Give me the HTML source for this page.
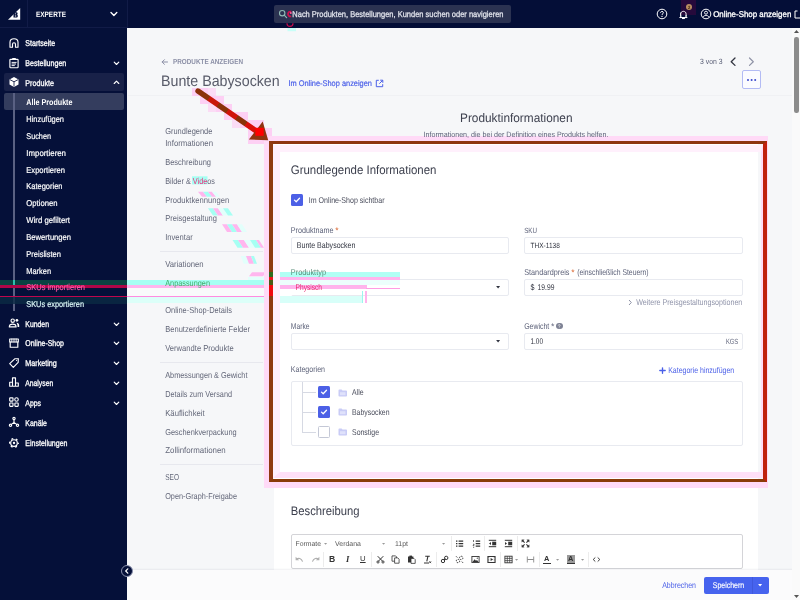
<!DOCTYPE html>
<html lang="de"><head><meta charset="utf-8"><title>Bunte Babysocken</title>
<style>
html,body{margin:0;padding:0}
body{width:800px;height:600px;overflow:hidden;position:relative;background:#f6f7f9;font-family:"Liberation Sans",sans-serif;}
.a{position:absolute}
.t{position:absolute;white-space:pre;line-height:12px;height:12px;will-change:transform}
#top{left:0;top:0;width:800px;height:28px;background:#040e37}
#side{left:0;top:0;width:127px;height:600px;background:#051039}
.inp{background:#fff;border:1px solid #e8eaf0;border-radius:2px;box-sizing:border-box}
.sep{background:#e7e8ee;height:1px;left:160px;width:103px}
.cb{width:12px;height:12px;border-radius:1.5px;background:#4c60e6;box-sizing:border-box}
.cb.off{background:#fff;border:1px solid #c4c8d6}
.tl{background:#d6d9e3}
svg{position:absolute;overflow:visible}

</style></head>
<body>
<div class="a" id="top"></div>
<div class="a" id="side"></div>
<!-- header dividers -->
<div class="a" style="left:27px;top:0;width:1px;height:27px;background:#111b47"></div>
<div class="a" style="left:0;top:27px;width:127px;height:1px;background:#111b47"></div>
<div class="a" style="left:127px;top:0;width:1px;height:28px;background:#111b47"></div>
<!-- logo -->
<svg style="left:0;top:0" width="28" height="28" viewBox="0 0 28 28">
  <path d="M8 19.8 L20.2 19.8 L20.2 8 Z" fill="#fff"/>
  <path d="M13.500 12.300h2.700c.9 0 1.400.5 1.400 1.200c0 .6-.2.900-.6 1.100c.5.200.8.600.8 1.300c0 .9-.6 1.600-1.600 1.600h-2.700z" fill="#051039"/>
  <path d="M14.900 13.500h1.100v.8h-1.100zM14.900 15.500h1.300v.9h-1.300z" fill="#fff"/>
</svg>
<svg style="left:110px;top:10px" width="8" height="8" viewBox="0 0 8 8"><path d="M1 2.6 L3.9 5.4 L6.8 2.6" fill="none" stroke="#fff" stroke-width="1.4" stroke-linecap="round" stroke-linejoin="round"/></svg>
<!-- search -->
<div class="a" style="left:274px;top:5px;width:236.5px;height:18px;background:#2b3251;border-radius:2px"></div>
<svg style="left:278px;top:9px" width="10" height="10" viewBox="0 0 10 10"><circle cx="4.2" cy="4.2" r="2.7" fill="none" stroke="#8fb9b4" stroke-width="1.1"/><path d="M6.2 6.2 L8.6 8.6" stroke="#8fb9b4" stroke-width="1.2" stroke-linecap="round"/></svg>
<svg style="left:284px;top:8px" width="14" height="24" viewBox="0 0 14 24"><path d="M7.200 3.600A2.500 2.500 0 1 0 7.200 8.400" fill="none" stroke="#d2104e" stroke-width="1.700"/><circle cx="6.800" cy="5" r="1" fill="#ff5c9a"/><path d="M3 15.200C3 19.400 9 19.400 9 15.200" fill="none" stroke="#c40c4a" stroke-width="1.200"/><rect x="3.500" y="20" width="8.500" height="3.200" fill="#c8fff8"/></svg>
<!-- topbar icons -->
<svg style="left:656px;top:8px" width="12" height="12" viewBox="0 0 12 12"><circle cx="6" cy="6" r="4.8" fill="none" stroke="#fff" stroke-width="1"/><path d="M4.6 4.9c0-1 .6-1.5 1.4-1.5s1.4.5 1.4 1.3c0 1-1.4 1-1.4 2.2" fill="none" stroke="#fff" stroke-width="1"/><circle cx="6" cy="8.4" r=".65" fill="#fff"/></svg>
<svg style="left:678.200px;top:8.800px" width="10.800" height="10.800" viewBox="0 0 12 12"><path d="M3 8.6V5.6c0-1.8 1.3-3 3-3s3 1.200 3 3v3l.9.900H2.100z" fill="none" stroke="#fff" stroke-width="1" stroke-linejoin="round"/><path d="M5 10.600h2" stroke="#fff" stroke-width="1.1" stroke-linecap="round"/></svg>
<div class="a" style="left:680.5px;top:0;width:15.5px;height:15px;background:#2a0a3c;opacity:.9"></div>
<svg style="left:678.200px;top:8.800px" width="10.800" height="10.800" viewBox="0 0 12 12"><path d="M3 8.6V5.6c0-1.8 1.3-3 3-3s3 1.200 3 3v3l.9.900H2.100z" fill="none" stroke="#fff" stroke-width="1" stroke-linejoin="round"/><path d="M5 10.600h2" stroke="#fff" stroke-width="1.1" stroke-linecap="round"/></svg>
<div class="a" style="left:686px;top:3.600px;width:6.400px;height:6.400px;border-radius:4px;background:#b98f62"></div>
<svg style="left:699.5px;top:8px" width="12" height="12" viewBox="0 0 12 12"><circle cx="6" cy="6" r="4.8" fill="none" stroke="#fff" stroke-width="1"/><circle cx="6" cy="4.700" r="1.5" fill="none" stroke="#fff" stroke-width=".9"/><path d="M2.900 9.300c.7-1.400 1.800-1.900 3.100-1.900s2.400.5 3.100 1.900" fill="none" stroke="#fff" stroke-width=".9"/></svg>
<svg style="left:794px;top:9.500px" width="8" height="9" viewBox="0 0 8 9"><path d="M3.500 1H1v7h6" fill="none" stroke="#fff" stroke-width="1"/></svg>
<!-- sidebar highlight rows -->
<div class="a" style="left:4px;top:73.400px;width:120px;height:18px;background:#182148;border-radius:2px"></div>
<div class="a" style="left:4px;top:93.400px;width:120px;height:16.500px;background:#343d5e;border-radius:2px"></div>
<div class="a" style="left:13.400px;top:93.400px;width:1.200px;height:218px;background:#5a6183"></div>
<svg style="left:7.50px;top:36.80px" width="12" height="12" viewBox="0 0 12 12"><path d="M2 10.200V5.300C2 3 3.800 1.700 6 1.700S10 3 10 5.300V10.200H7.500V7.200C7.500 6.200 6.900 5.700 6 5.700S4.500 6.200 4.500 7.200V10.200Z" fill="none" stroke="#fff" stroke-width="1.15" stroke-linecap="round" stroke-linejoin="round"/></svg>
<svg style="left:7.50px;top:56.80px" width="12" height="12" viewBox="0 0 12 12"><rect x="1.900" y="2.300" width="8.200" height="8.400" rx=".8" fill="none" stroke="#fff" stroke-width="1.15" stroke-linecap="round" stroke-linejoin="round"/><rect x="4.200" y=".9" width="3.600" height="2.200" rx=".5" fill="#fff"/><path d="M4 5.400h4.200M4 7h3.600M4 8.600h2.400" fill="none" stroke="#fff" stroke-width=".95" stroke-linecap="round" stroke-linejoin="round"/></svg>
<svg style="left:7.50px;top:75.60px" width="12" height="12" viewBox="0 0 12 12"><path d="M6 1.100L10.500 3.400V8.600L6 10.900L1.500 8.600V3.400Z" fill="#fff"/><path d="M2 3.700L6 5.800L10 3.700M6 5.800V10.500" fill="none" stroke="#182148" stroke-width=".9"/></svg>
<svg style="left:7.50px;top:317.00px" width="12" height="12" viewBox="0 0 12 12"><circle cx="4.700" cy="3.700" r="1.700" fill="none" stroke="#fff" stroke-width="1.15" stroke-linecap="round" stroke-linejoin="round"/><path d="M1.300 9.900c0-2 1.500-2.800 3.400-2.800s3.400.8 3.400 2.800z" fill="none" stroke="#fff" stroke-width="1.15" stroke-linecap="round" stroke-linejoin="round"/><circle cx="8.900" cy="3.300" r="1.350" fill="#fff"/><path d="M8.400 5.800c1.700 0 2.800.9 2.800 2.600v1.500H9.600c0-1.800-.4-3-1.200-4.100z" fill="#fff"/></svg>
<svg style="left:7.50px;top:337.20px" width="12" height="12" viewBox="0 0 12 12"><path d="M1.700 2H10.300V5H1.700Z" fill="none" stroke="#fff" stroke-width="1.15" stroke-linecap="round" stroke-linejoin="round"/><path d="M3.850 2V5M6 2V5M8.150 2V5" fill="none" stroke="#fff" stroke-width=".95" stroke-linecap="round" stroke-linejoin="round"/><path d="M2.200 5V10.200H9.800V5" fill="none" stroke="#fff" stroke-width="1.15" stroke-linecap="round" stroke-linejoin="round"/></svg>
<svg style="left:7.50px;top:356.70px" width="12" height="12" viewBox="0 0 12 12"><path d="M6.700 1.800L10.300 1.700L10.200 5.300L5.300 10.300L1.700 6.700Z" fill="none" stroke="#fff" stroke-width="1.15" stroke-linecap="round" stroke-linejoin="round"/><circle cx="8.500" cy="3.500" r=".55" fill="#fff"/></svg>
<svg style="left:7.50px;top:376.40px" width="12" height="12" viewBox="0 0 12 12"><path d="M1.700 10.200V6.200H4.500V10.200M4.500 10.200V1.900H7.500V10.200M7.500 10.200V7H10.300V10.200H1.700" fill="none" stroke="#fff" stroke-width="1.15" stroke-linecap="round" stroke-linejoin="round"/></svg>
<svg style="left:7.50px;top:396.20px" width="12" height="12" viewBox="0 0 12 12"><rect x="1.700" y="1.800" width="3.300" height="3.300" rx=".5" fill="none" stroke="#fff" stroke-width="1.15" stroke-linecap="round" stroke-linejoin="round"/><circle cx="8.500" cy="3.450" r="1.750" fill="none" stroke="#fff" stroke-width="1.15" stroke-linecap="round" stroke-linejoin="round"/><rect x="1.700" y="7" width="3.300" height="3.300" rx=".5" fill="none" stroke="#fff" stroke-width="1.15" stroke-linecap="round" stroke-linejoin="round"/><rect x="6.900" y="7" width="3.300" height="3.300" rx=".5" fill="none" stroke="#fff" stroke-width="1.15" stroke-linecap="round" stroke-linejoin="round"/></svg>
<svg style="left:7.50px;top:416.20px" width="12" height="12" viewBox="0 0 12 12"><circle cx="6" cy="2.500" r="1.150" fill="none" stroke="#fff" stroke-width="1.15" stroke-linecap="round" stroke-linejoin="round"/><circle cx="2.500" cy="9.200" r="1.150" fill="none" stroke="#fff" stroke-width="1.15" stroke-linecap="round" stroke-linejoin="round"/><circle cx="9.500" cy="9.200" r="1.150" fill="none" stroke="#fff" stroke-width="1.15" stroke-linecap="round" stroke-linejoin="round"/><path d="M6 3.700V6.400L3.400 8.400M6 6.400L8.600 8.400" fill="none" stroke="#fff" stroke-width="1.15" stroke-linecap="round" stroke-linejoin="round"/></svg>
<svg style="left:7.50px;top:436.60px" width="12" height="12" viewBox="0 0 12 12"><circle cx="6" cy="6" r="3.300" fill="none" stroke="#fff" stroke-width="1.15" stroke-linecap="round" stroke-linejoin="round"/><circle cx="6" cy="6" r="4.350" fill="none" stroke="#fff" stroke-width="1.300" stroke-dasharray="1.900 2.655" stroke-dashoffset=".95"/><circle cx="6" cy="6" r="1.150" fill="#fff"/></svg>
<svg style="left:112.80px;top:61.30px" width="7" height="4.6" viewBox="0 0 7 4.6"><path d="M1.200 1.200L3.500 3.500L5.800 1.200" fill="none" stroke="#fff" stroke-width="1.150" stroke-linecap="round" stroke-linejoin="round"/></svg>
<svg style="left:112.80px;top:80.10px" width="7" height="4.6" viewBox="0 0 7 4.6"><path d="M1.200 3.500L3.500 1.200L5.800 3.500" fill="none" stroke="#fff" stroke-width="1.150" stroke-linecap="round" stroke-linejoin="round"/></svg>
<svg style="left:112.80px;top:321.50px" width="7" height="4.6" viewBox="0 0 7 4.6"><path d="M1.200 1.200L3.500 3.500L5.800 1.200" fill="none" stroke="#fff" stroke-width="1.150" stroke-linecap="round" stroke-linejoin="round"/></svg>
<svg style="left:112.80px;top:341.30px" width="7" height="4.6" viewBox="0 0 7 4.6"><path d="M1.200 1.200L3.500 3.500L5.800 1.200" fill="none" stroke="#fff" stroke-width="1.150" stroke-linecap="round" stroke-linejoin="round"/></svg>
<svg style="left:112.80px;top:361.10px" width="7" height="4.6" viewBox="0 0 7 4.6"><path d="M1.200 1.200L3.500 3.500L5.800 1.200" fill="none" stroke="#fff" stroke-width="1.150" stroke-linecap="round" stroke-linejoin="round"/></svg>
<svg style="left:112.80px;top:381.10px" width="7" height="4.6" viewBox="0 0 7 4.6"><path d="M1.200 1.200L3.500 3.500L5.800 1.200" fill="none" stroke="#fff" stroke-width="1.150" stroke-linecap="round" stroke-linejoin="round"/></svg>
<svg style="left:112.80px;top:400.70px" width="7" height="4.6" viewBox="0 0 7 4.6"><path d="M1.200 1.200L3.500 3.500L5.800 1.200" fill="none" stroke="#fff" stroke-width="1.150" stroke-linecap="round" stroke-linejoin="round"/></svg>
<!-- page header -->
<div class="a" style="left:128px;top:95px;width:664px;height:1px;background:#f0f1f4"></div>
<svg style="left:161px;top:57.500px" width="8" height="8" viewBox="0 0 8 8"><path d="M6.500 4H1.200M3.400 1.700 L1.100 4 L3.400 6.300" fill="none" stroke="#8b8fa6" stroke-width="1" stroke-linecap="round" stroke-linejoin="round"/></svg>
<svg style="left:374.500px;top:78.500px" width="9" height="9" viewBox="0 0 9 9"><path d="M3.800 1.300H1.300v6.400h6.400V5.200" fill="none" stroke="#4a5fe8" stroke-width="1"/><path d="M5.200 1.200h2.600v2.600M7.600 1.400 L4.300 4.700" fill="none" stroke="#4a5fe8" stroke-width="1"/></svg>
<svg style="left:728.500px;top:57px" width="9" height="10" viewBox="0 0 9 10"><path d="M6 1 L2.200 4.700 L6 8.400" fill="none" stroke="#313440" stroke-width="1.300" stroke-linecap="round" stroke-linejoin="round"/></svg>
<svg style="left:746.500px;top:57px" width="9" height="10" viewBox="0 0 9 10"><path d="M2.500 1 L6.300 4.700 L2.500 8.400" fill="none" stroke="#8e92a6" stroke-width="1.200" stroke-linecap="round" stroke-linejoin="round"/></svg>
<div class="a" style="left:742.200px;top:70.200px;width:18.500px;height:18.500px;border:1px solid #b3bbf4;border-radius:2px;background:#fbfbff;box-sizing:border-box"></div>
<div class="a" style="left:746.500px;top:78.500px;width:2.100px;height:2.100px;border-radius:1.100px;background:#3a48cc;box-shadow:3.600px 0 0 #3a48cc,7.200px 0 0 #3a48cc"></div>
<!-- left nav separators -->
<div class="a sep" style="top:250.500px"></div>
<div class="a sep" style="top:297px"></div>
<div class="a sep" style="top:361.500px"></div>
<div class="a sep" style="top:463.500px"></div>

<!-- cards -->
<div class="a" style="left:274px;top:142px;width:484.400px;height:337px;background:#fff"></div>
<div class="a" style="left:274px;top:487.600px;width:484.400px;height:113px;background:#fff"></div>

<!-- card1 fields -->
<div class="a cb" style="left:290.600px;top:194.400px"></div>
<svg style="left:290.600px;top:194.400px" width="12" height="12" viewBox="0 0 12 12"><path d="M3.500 6.100 L5.200 7.700 L8.500 4.300" fill="none" stroke="#fff" stroke-width="1.300" stroke-linecap="round" stroke-linejoin="round"/></svg>
<div class="a inp" style="left:290.600px;top:236.800px;width:218px;height:17px"></div>
<div class="a inp" style="left:523.600px;top:236.800px;width:219px;height:17px"></div>
<div class="a inp" style="left:290.600px;top:278.500px;width:218px;height:17px"></div>
<div class="a inp" style="left:523.600px;top:278.500px;width:219px;height:17px"></div>
<div class="a inp" style="left:290.600px;top:332.500px;width:218px;height:17px"></div>
<div class="a inp" style="left:523.600px;top:332.500px;width:219px;height:17px"></div>
<svg style="left:496.400px;top:285.900px" width="4.200" height="2.400" viewBox="0 0 5 3"><path d="M0 0h5L2.500 3z" fill="#313440"/></svg>
<svg style="left:496.400px;top:339.900px" width="4.200" height="2.400" viewBox="0 0 5 3"><path d="M0 0h5L2.500 3z" fill="#313440"/></svg>
<svg style="left:628.400px;top:299.300px" width="5" height="7" viewBox="0 0 5 7"><path d="M1.300 1.300 L3.300 3.500 L1.300 5.700" fill="none" stroke="#8e92a6" stroke-width="1" stroke-linecap="round" stroke-linejoin="round"/></svg>
<!-- help icon -->
<div class="a" style="left:556.400px;top:322.900px;width:6.400px;height:6.400px;border-radius:3.200px;background:#7e8294"></div>
<svg style="left:556.400px;top:322.900px" width="6.400" height="6.400" viewBox="0 0 5.800 5.800"><path d="M2.100 2.300c0-.6.400-.9.800-.9s.8.300.8.800c0 .6-.8.600-.8 1.300" fill="none" stroke="#fff" stroke-width=".6"/><circle cx="2.900" cy="4.400" r=".4" fill="#fff"/></svg>
<!-- plus -->
<svg style="left:658.500px;top:366.700px" width="7" height="7" viewBox="0 0 7 7"><path d="M3.500 .800v5.400M.800 3.500h5.400" stroke="#4a5fe8" stroke-width="1.350" stroke-linecap="round"/></svg>
<!-- category box -->
<div class="a inp" style="left:290.600px;top:381.400px;width:452px;height:65px"></div>
<div class="a tl" style="left:301.800px;top:382px;width:1px;height:50.800px"></div>
<div class="a tl" style="left:301.800px;top:392.200px;width:14px;height:1px"></div>
<div class="a tl" style="left:301.800px;top:412.200px;width:14px;height:1px"></div>
<div class="a tl" style="left:301.800px;top:432.200px;width:14px;height:1px"></div>
<div class="a cb" style="left:317.600px;top:386.400px"></div>
<svg style="left:317.600px;top:386.400px" width="12" height="12" viewBox="0 0 12 12"><path d="M3.500 6.100 L5.200 7.700 L8.500 4.300" fill="none" stroke="#fff" stroke-width="1.300" stroke-linecap="round" stroke-linejoin="round"/></svg>
<div class="a cb" style="left:317.600px;top:406.200px"></div>
<svg style="left:317.600px;top:406.200px" width="12" height="12" viewBox="0 0 12 12"><path d="M3.500 6.100 L5.200 7.700 L8.500 4.300" fill="none" stroke="#fff" stroke-width="1.300" stroke-linecap="round" stroke-linejoin="round"/></svg>
<div class="a cb off" style="left:317.600px;top:426.200px"></div>
<svg style="left:338px;top:388.500px" width="10" height="8" viewBox="0 0 10 8"><path d="M.5 1.300c0-.5.300-.8.800-.8h2.300l.9 1h3.700c.5 0 .8.300.8.800v4.400c0 .5-.3.800-.8.800H1.300c-.5 0-.8-.3-.8-.8z" fill="#c9ccf6"/><path d="M2 3.200h5.500v3H2z" fill="#dfe1fb"/></svg>
<svg style="left:338px;top:408.300px" width="10" height="8" viewBox="0 0 10 8"><path d="M.5 1.300c0-.5.300-.8.800-.8h2.300l.9 1h3.700c.5 0 .8.300.8.800v4.400c0 .5-.3.800-.8.800H1.300c-.5 0-.8-.3-.8-.8z" fill="#c9ccf6"/><path d="M2 3.200h5.500v3H2z" fill="#dfe1fb"/></svg>
<svg style="left:338px;top:428.300px" width="10" height="8" viewBox="0 0 10 8"><path d="M.5 1.300c0-.5.300-.8.800-.8h2.300l.9 1h3.700c.5 0 .8.300.8.800v4.400c0 .5-.3.800-.8.800H1.300c-.5 0-.8-.3-.8-.8z" fill="#c9ccf6"/><path d="M2 3.200h5.500v3H2z" fill="#dfe1fb"/></svg>

<!-- editor -->
<div class="a" style="left:290.600px;top:534.400px;width:452px;height:34.200px;border:1px solid #d4d4d8;border-radius:2px;background:#fff;box-sizing:border-box"></div>
<svg style="left:323.80px;top:542.60px" width="3.2" height="1.8" viewBox="0 0 3.2 1.8"><path d="M0 0h3.200L1.600 1.800z" fill="#9a9a9a"/></svg>
<svg style="left:381.80px;top:542.60px" width="3.2" height="1.8" viewBox="0 0 3.2 1.8"><path d="M0 0h3.200L1.600 1.800z" fill="#9a9a9a"/></svg>
<svg style="left:442.20px;top:542.60px" width="3.2" height="1.8" viewBox="0 0 3.2 1.8"><path d="M0 0h3.200L1.600 1.800z" fill="#9a9a9a"/></svg>
<div class="a" style="left:451.0px;top:536.0px;width:1px;height:15.0px;background:#ececec"></div>
<div class="a" style="left:483.5px;top:536.0px;width:1px;height:15.0px;background:#ececec"></div>
<div class="a" style="left:516.5px;top:536.0px;width:1px;height:15.0px;background:#ececec"></div>
<svg style="left:455.30px;top:538.70px" width="9" height="9" viewBox="0 0 9 9"><path d="M1 1.500h1.400v1.200H1zM1 4h1.400v1.200H1zM1 6.500h1.400v1.200H1z" fill="#333"/><path d="M3.600 2.100h4.600M3.600 4.600h4.600M3.600 7.100h4.600" stroke="#333" stroke-width="1.100"/></svg>
<svg style="left:471.50px;top:538.70px" width="9" height="9" viewBox="0 0 9 9"><path d="M1.500 1v2M1 5.200h1.200L1 6.600h1.300M1 8.300h1.200" stroke="#333" stroke-width=".7" fill="none"/><path d="M3.700 2.100h4.500M3.700 4.600h4.500M3.700 7.100h4.500" stroke="#333" stroke-width="1.100"/></svg>
<svg style="left:487.50px;top:538.70px" width="9" height="9" viewBox="0 0 9 9"><path d="M.8 1.300h7.400M.8 7.700h7.400" stroke="#333" stroke-width="1"/><rect x="4.200" y="2.700" width="4" height="3.600" fill="#333"/><path d="M3 3.100v2.800L1 4.500z" fill="#333"/></svg>
<svg style="left:503.50px;top:538.70px" width="9" height="9" viewBox="0 0 9 9"><path d="M.8 1.300h7.400M.8 7.700h7.400" stroke="#333" stroke-width="1"/><rect x="4.200" y="2.700" width="4" height="3.600" fill="#333"/><path d="M1 3.100v2.800L3 4.500z" fill="#333"/></svg>
<svg style="left:520.50px;top:538.70px" width="9" height="9" viewBox="0 0 9 9"><path d="M.8 3.200V.8h2.400L.8 3.200M8.200 3.200V.8H5.800L8.200 3.200M.8 5.800v2.400h2.400L.8 5.800M8.200 5.800v2.400H5.800L8.200 5.800" fill="#333" stroke="#333" stroke-width=".3"/><path d="M1.600 1.600L3.600 3.600M7.400 1.600L5.400 3.600M1.600 7.400L3.600 5.400M7.400 7.400L5.400 5.400" stroke="#333" stroke-width="1.100"/></svg>
<svg style="left:294.90px;top:555.10px" width="9" height="9" viewBox="0 0 9 9"><path d="M1.200 4.300C3.500 2.700 6.300 3 7.600 6.600" fill="none" stroke="#b0b0b0" stroke-width="1.200"/><path d="M.6 1.700v3.600h3.500z" fill="#b0b0b0"/></svg>
<svg style="left:310.50px;top:555.10px" width="9" height="9" viewBox="0 0 9 9"><path d="M7.800 4.300C5.500 2.700 2.700 3 1.400 6.600" fill="none" stroke="#b0b0b0" stroke-width="1.200"/><path d="M8.400 1.700v3.600H4.900z" fill="#b0b0b0"/></svg>
<div class="a" style="left:323.4px;top:552.0px;width:1px;height:15.0px;background:#ececec"></div>
<span class="t" style="left:328.6px;top:553.4px;font-size:8.6px;font-weight:700;color:#333">B</span>
<span class="t" style="left:345.6px;top:553.4px;font-size:8.6px;font-weight:700;font-style:italic;color:#333;font-family:'Liberation Serif',serif">I</span>
<span class="t" style="left:360.2px;top:553.2px;font-size:7.8px;color:#333;text-decoration:underline;text-underline-offset:1px">U</span>
<div class="a" style="left:371.4px;top:552.0px;width:1px;height:15.0px;background:#ececec"></div>
<svg style="left:375.90px;top:555.10px" width="9" height="9" viewBox="0 0 9 9"><path d="M1.700 1.200L6.700 6.300M7.300 1.200L2.300 6.300" stroke="#333" stroke-width="1"/><circle cx="2" cy="7" r="1.100" fill="none" stroke="#333" stroke-width=".9"/><circle cx="7" cy="7" r="1.100" fill="none" stroke="#333" stroke-width=".9"/></svg>
<svg style="left:391.10px;top:555.10px" width="9" height="9" viewBox="0 0 9 9"><path d="M1 .9h3.600l1 1v4.300H1z" fill="#fff" stroke="#333" stroke-width=".8"/><path d="M3.600 2.900h3.200l1.300 1.300v4H3.600z" fill="#fff" stroke="#333" stroke-width=".8"/></svg>
<svg style="left:406.90px;top:555.10px" width="9" height="9" viewBox="0 0 9 9"><path d="M1 1.500h5.400v6H1z" fill="#333"/><rect x="2.400" y=".6" width="2.600" height="1.600" fill="#333"/><path d="M4 3.400h3l1.200 1.200v3.800H4z" fill="#fff" stroke="#333" stroke-width=".8"/></svg>
<svg style="left:422.70px;top:555.10px" width="9" height="9" viewBox="0 0 9 9"><path d="M2.200 1.300h4.600M4.900 1.300L3.800 6.300" stroke="#333" stroke-width="1.100" fill="none"/><path d="M1 8h5" stroke="#333" stroke-width="1"/><path d="M6.300 6.300l1.800 1.800M8.100 6.300L6.300 8.100" stroke="#333" stroke-width=".8"/></svg>
<div class="a" style="left:435.6px;top:552.0px;width:1px;height:15.0px;background:#ececec"></div>
<svg style="left:439.50px;top:555.10px" width="9" height="9" viewBox="0 0 9 9"><circle cx="3" cy="6" r="1.700" fill="none" stroke="#333" stroke-width="1"/><circle cx="6.200" cy="2.900" r="1.700" fill="none" stroke="#333" stroke-width="1"/><path d="M3.900 5.100L5.300 3.800" stroke="#333" stroke-width="1"/></svg>
<svg style="left:455.30px;top:555.10px" width="9" height="9" viewBox="0 0 9 9"><circle cx="3" cy="6" r="1.700" fill="none" stroke="#333" stroke-width="1" stroke-dasharray="1.400 1"/><circle cx="6.200" cy="2.900" r="1.700" fill="none" stroke="#333" stroke-width="1" stroke-dasharray="1.400 1"/><path d="M1 1.200L2.400 2.600M6.800 6.600L8.200 8" stroke="#333" stroke-width=".8"/></svg>
<svg style="left:471.10px;top:555.10px" width="9" height="9" viewBox="0 0 9 9"><rect x=".9" y="1.500" width="7.200" height="6" fill="none" stroke="#333" stroke-width=".9"/><path d="M1.500 7L3.600 4.200L5 5.800L6 5L7.500 7z" fill="#333"/><circle cx="6.300" cy="3.200" r=".6" fill="#333"/></svg>
<svg style="left:486.90px;top:555.10px" width="9" height="9" viewBox="0 0 9 9"><rect x=".9" y="1.500" width="7.200" height="6" fill="none" stroke="#333" stroke-width="1"/><path d="M3.600 3v3L6.100 4.500z" fill="#333"/><path d="M1.700 2.300v4.400M7.300 2.300v4.400" stroke="#333" stroke-width=".7" stroke-dasharray=".8 .8"/></svg>
<div class="a" style="left:500.3px;top:552.0px;width:1px;height:15.0px;background:#ececec"></div>
<svg style="left:503.50px;top:555.10px" width="9" height="9" viewBox="0 0 9 9"><rect x=".9" y="1.200" width="7.200" height="6.600" fill="none" stroke="#333" stroke-width=".9"/><path d="M.9 3.400h7.200M.9 5.600h7.200M3.300 1.200v6.600M5.700 1.200v6.600" stroke="#333" stroke-width=".7"/></svg>
<svg style="left:515.00px;top:559.00px" width="3.2" height="1.8" viewBox="0 0 3.2 1.8"><path d="M0 0h3.200L1.600 1.800z" fill="#9a9a9a"/></svg>
<svg style="left:525.50px;top:555.10px" width="9" height="9" viewBox="0 0 9 9"><path d="M1.300 1.500v6M7.700 1.500v6" stroke="#8a8a8a" stroke-width=".9"/><path d="M1.300 4.500h6.400" stroke="#8a8a8a" stroke-width="1"/></svg>
<div class="a" style="left:539.0px;top:552.0px;width:1px;height:15.0px;background:#ececec"></div>
<span class="t" style="left:544px;top:552.600px;font-size:7.4px;font-weight:700;color:#333">A</span>
<div class="a" style="left:543px;top:563.300px;width:7.600px;height:1.200px;background:#333"></div>
<svg style="left:556.40px;top:559.00px" width="3.2" height="1.8" viewBox="0 0 3.2 1.8"><path d="M0 0h3.200L1.600 1.800z" fill="#9a9a9a"/></svg>
<div class="a" style="left:567px;top:555.300px;width:8px;height:8.200px;background:#9a9a9a"></div>
<span class="t" style="left:568.200px;top:552.600px;font-size:7.4px;font-weight:700;color:#333">A</span>
<div class="a" style="left:567px;top:563.300px;width:8px;height:1.200px;background:#333"></div>
<svg style="left:580.80px;top:559.00px" width="3.2" height="1.8" viewBox="0 0 3.2 1.8"><path d="M0 0h3.200L1.600 1.800z" fill="#9a9a9a"/></svg>
<div class="a" style="left:588.0px;top:552.0px;width:1px;height:15.0px;background:#ececec"></div>
<svg style="left:591.90px;top:555.10px" width="9" height="9" viewBox="0 0 9 9"><path d="M3.300 2.500L1.200 4.500L3.300 6.500M5.700 2.500L7.800 4.500L5.700 6.500" fill="none" stroke="#333" stroke-width=".95"/></svg>

<!-- footer -->
<div class="a" style="left:127px;top:569.500px;width:666px;height:31px;background:#fbfbfc;box-shadow:0 -1px 1.500px rgba(40,50,80,.07)"></div>
<div class="a" style="left:704.400px;top:576.800px;width:64.200px;height:17px;border-radius:2px;background:#4663ee"></div>
<div class="a" style="left:751.800px;top:576.800px;width:1px;height:17px;background:#3f58dc"></div>
<svg style="left:757.600px;top:584.300px" width="4.200" height="2.400" viewBox="0 0 5 3"><path d="M0 0h5L2.500 3z" fill="#fff"/></svg>

<!-- collapse btn -->
<div class="a" style="left:121px;top:565.300px;width:12.200px;height:12.200px;border-radius:7px;background:#051039;border:1px solid #8a90ad;box-sizing:border-box"></div>
<svg style="left:123px;top:567.300px" width="8" height="8" viewBox="0 0 8 8"><path d="M4.800 1.800 L2.700 4 L4.800 6.200" fill="none" stroke="#fff" stroke-width="1.200" stroke-linecap="round" stroke-linejoin="round"/></svg>

<!-- scrollbar -->
<div class="a" style="left:792px;top:28px;width:8px;height:572px;background:#fafafa"></div>
<div class="a" style="left:794.400px;top:36.700px;width:4.400px;height:76px;border-radius:2.200px;background:#8c8c8c"></div>
<svg style="left:794px;top:30px" width="5" height="3" viewBox="0 0 5 3"><path d="M0 3h5L2.500 0z" fill="#555"/></svg>
<svg style="left:794px;top:594.500px" width="5" height="3" viewBox="0 0 5 3"><path d="M0 0h5L2.500 3z" fill="#555"/></svg>

<div class="a" style="left:273.0px;top:271.8px;width:127.0px;height:5.6px;background:#b0fff4"></div>
<div class="a" style="left:273.0px;top:277.4px;width:127.0px;height:2.3px;background:#ffb4ec"></div>
<div class="a" style="left:273.0px;top:279.7px;width:127.0px;height:5.0px;background:#ecfffc"></div>
<div class="a" style="left:273.0px;top:284.9px;width:93.5px;height:3.7px;background:#ffb4ec"></div>
<div class="a" style="left:366.0px;top:288.0px;width:34.0px;height:0.9px;background:#ff9ce4"></div>
<div class="a" style="left:273.0px;top:288.8px;width:127.0px;height:6.6px;background:#ffffff"></div>
<div class="a" style="left:273.0px;top:295.5px;width:89.0px;height:7.6px;background:#d8fff9"></div>
<div class="a" style="left:273.0px;top:295.8px;width:7.0px;height:0.9px;background:#ff8ce0"></div>
<div class="a" style="left:361.5px;top:290.5px;width:1.8px;height:12.5px;background:#9cf5ee"></div>
<div class="a" style="left:364.5px;top:290.5px;width:2.2px;height:12.5px;background:#ffb4ec"></div>
<div class="a" style="left:0.0px;top:280.2px;width:127.0px;height:4.8px;background:#0a4342"></div>
<div class="a" style="left:13.4px;top:280.2px;width:1.2px;height:4.8px;background:#2fbfae"></div>
<div class="a" style="left:0.0px;top:285.0px;width:127.0px;height:3.2px;background:#ae0648"></div>
<div class="a" style="left:0.0px;top:296.2px;width:127.0px;height:0.9px;background:#c0064e"></div>
<div class="a" style="left:0.0px;top:297.1px;width:127.0px;height:7.0px;background:#0a2a44;opacity:0.8"></div>
<div class="a" style="left:127.0px;top:279.8px;width:139.0px;height:5.0px;background:#a6fff3"></div>
<div class="a" style="left:127.0px;top:284.8px;width:141.0px;height:3.0px;background:#ffb6ee"></div>
<div class="a" style="left:127.0px;top:287.8px;width:141.0px;height:8.0px;background:#ffffff;opacity:0.4"></div>
<div class="a" style="left:127.0px;top:295.8px;width:142.0px;height:0.9px;background:#ff8ce0"></div>
<div class="a" style="left:127.0px;top:296.7px;width:137.0px;height:6.6px;background:#dcfff9"></div>
<div class="a" style="left:248.0px;top:276.7px;width:18.0px;height:3.1px;background:#e2fffb"></div>
<svg style="left:0;top:0" width="800" height="600" viewBox="0 0 800 600"><path d="M192.0 176.3L207.5 176.3L207.5 184.4L192.0 184.4Z" fill="#a6fff3"/><path d="M198.0 191.8L203.0 191.8L207.0 196.7L202.0 196.7Z" fill="#ffb6ee"/><path d="M203.0 191.8L208.0 191.8L212.0 196.7L207.0 196.7Z" fill="#a6fff3"/><path d="M208.0 191.8L212.0 191.8L216.0 196.7L212.0 196.7Z" fill="#ffb6ee"/><path d="M212.0 191.8L216.0 191.8L220.0 196.7L216.0 196.7Z" fill="#e2fffb"/><path d="M208.0 208.3L213.0 208.3L218.0 215.6L213.0 215.6Z" fill="#a6fff3"/><path d="M213.0 208.3L218.0 208.3L223.0 215.6L218.0 215.6Z" fill="#ffb6ee"/><path d="M218.0 208.3L223.0 208.3L228.0 215.6L223.0 215.6Z" fill="#e2fffb"/><path d="M223.0 208.3L228.0 208.3L233.0 215.6L228.0 215.6Z" fill="#a6fff3"/><path d="M222.0 224.3L227.0 224.3L232.0 232.0L227.0 232.0Z" fill="#ffb6ee"/><path d="M227.0 224.3L232.0 224.3L237.0 232.0L232.0 232.0Z" fill="#a6fff3"/><path d="M232.0 224.3L237.0 224.3L242.0 232.0L237.0 232.0Z" fill="#ffb6ee"/><path d="M237.0 224.3L242.0 224.3L247.0 232.0L242.0 232.0Z" fill="#e2fffb"/><path d="M232.5 240.0L238.0 240.0L243.0 247.8L237.5 247.8Z" fill="#a6fff3"/><path d="M238.0 240.0L244.0 240.0L249.0 247.8L243.0 247.8Z" fill="#ffb6ee"/><path d="M244.0 240.0L250.0 240.0L255.0 247.8L249.0 247.8Z" fill="#e2fffb"/><path d="M250.0 240.0L256.0 240.0L261.0 247.8L255.0 247.8Z" fill="#a6fff3"/><path d="M256.0 240.0L259.0 240.0L264.0 247.8L261.0 247.8Z" fill="#ffb6ee"/><path d="M240.7 256.0L246.0 256.0L249.0 263.8L243.7 263.8Z" fill="#e2fffb"/><path d="M246.0 256.0L251.0 256.0L254.0 263.8L249.0 263.8Z" fill="#ffb6ee"/><path d="M251.0 256.0L254.0 256.0L257.0 263.8L254.0 263.8Z" fill="#a6fff3"/><path d="M264.0 256.0L267.0 256.0L270.0 263.8L267.0 263.8Z" fill="#ffb6ee"/><path d="M252.0 272.2L266.0 272.2L263.0 276.2L249.0 276.2Z" fill="#ffb6ee"/></svg>

<!-- annotation: rectangle + arrow -->
<div class="a" style="left:264px;top:136px;width:504px;height:351.600px;box-sizing:border-box;border-style:solid;border-color:#ffdaf7;border-width:5px 1.200px 6px 5px"></div>
<div class="a" style="left:273px;top:144.500px;width:489.500px;height:333.700px;box-sizing:border-box;border-style:solid;border-color:#fff0fc #ffdcf7 #ffe0f7 #ffeffc;border-width:7.500px 2.500px 6px 7px"></div>
<div class="a" style="left:269px;top:141px;width:498px;height:340.600px;box-sizing:border-box;border-style:solid;border-color:#8f3510 #c0220e #8a3b08 #8f3a10;border-width:3.600px 4.600px 3.500px 4px"></div>
<div class="a" style="left:269px;top:272px;width:4px;height:5.400px;background:#2f6a1c"></div>
<div class="a" style="left:269px;top:277.400px;width:4px;height:2.600px;background:#e8101a"></div>
<div class="a" style="left:269px;top:280px;width:4px;height:4.600px;background:#4a5a14"></div>
<div class="a" style="left:269px;top:284.600px;width:4px;height:11.400px;background:#f00a10"></div>
<svg style="left:0;top:0" width="800" height="600" viewBox="0 0 800 600">
<defs><linearGradient id="ag" gradientUnits="userSpaceOnUse" x1="198" y1="91" x2="256" y2="131">
<stop offset="0" stop-color="#8a3208"/><stop offset=".18" stop-color="#8a3208"/><stop offset=".19" stop-color="#c9180a"/><stop offset=".34" stop-color="#c9180a"/>
<stop offset=".35" stop-color="#8a3208"/><stop offset=".5" stop-color="#8a3208"/><stop offset=".51" stop-color="#d0140a"/><stop offset=".66" stop-color="#d0140a"/>
<stop offset=".67" stop-color="#8a3208"/><stop offset=".82" stop-color="#8a3208"/><stop offset=".83" stop-color="#d8100a"/><stop offset="1" stop-color="#d8100a"/></linearGradient></defs>
<rect x="192" y="88" width="8" height="8" fill="#ffc6f2" fill-opacity="0.80"/><rect x="200" y="88" width="8" height="8" fill="#ffc6f2" fill-opacity="0.80"/><rect x="208" y="88" width="8" height="8" fill="#ffc6f2" fill-opacity="0.55"/><rect x="200" y="96" width="8" height="8" fill="#ffc6f2" fill-opacity="0.80"/><rect x="208" y="96" width="8" height="8" fill="#ffc6f2" fill-opacity="0.80"/><rect x="216" y="96" width="8" height="8" fill="#ffc6f2" fill-opacity="0.80"/><rect x="208" y="104" width="8" height="8" fill="#ffc6f2" fill-opacity="0.55"/><rect x="216" y="104" width="8" height="8" fill="#ffc6f2" fill-opacity="0.80"/><rect x="224" y="104" width="8" height="8" fill="#ffc6f2" fill-opacity="0.80"/><rect x="224" y="112" width="8" height="8" fill="#ffc6f2" fill-opacity="0.80"/><rect x="232" y="112" width="8" height="8" fill="#ffc6f2" fill-opacity="0.80"/><rect x="240" y="112" width="8" height="8" fill="#ffc6f2" fill-opacity="0.80"/><rect x="232" y="120" width="8" height="8" fill="#ffc6f2" fill-opacity="0.55"/><rect x="240" y="120" width="8" height="8" fill="#ffc6f2" fill-opacity="0.80"/><rect x="248" y="120" width="8" height="8" fill="#ffc6f2" fill-opacity="0.80"/><rect x="256" y="120" width="8" height="8" fill="#ffc6f2" fill-opacity="0.80"/><rect x="248" y="128" width="8" height="8" fill="#ffc6f2" fill-opacity="0.80"/><rect x="256" y="128" width="8" height="8" fill="#ffc6f2" fill-opacity="0.80"/><rect x="264" y="128" width="8" height="8" fill="#ffc6f2" fill-opacity="0.80"/><rect x="248" y="136" width="8" height="8" fill="#ffc6f2" fill-opacity="0.80"/><rect x="256" y="136" width="8" height="8" fill="#ffc6f2" fill-opacity="0.80"/>
<path d="M198 91L257 131.500" stroke="url(#ag)" stroke-width="5.400" stroke-linecap="round" fill="none"/>
<path d="M262.700 121.500L248.900 139.600L268.200 140.200Z" fill="#8f3410"/>
<rect x="255.300" y="127.800" width="8.400" height="8" fill="#ff0000"/>
</svg>

<svg id="txt" style="left:0;top:0;will-change:transform" width="800" height="600" viewBox="0 0 800 600" font-family="Liberation Sans, sans-serif" text-rendering="geometricPrecision">
<text x="36.00" y="17" font-size="7.8" textLength="30.00" lengthAdjust="spacingAndGlyphs" fill="#ffffff" font-weight="700">EXPERTE</text>
<text x="292.30" y="17" font-size="8.4" textLength="211.20" lengthAdjust="spacingAndGlyphs" fill="#e4e6ee" stroke="#e4e6ee" stroke-width="0.25">Nach Produkten, Bestellungen, Kunden suchen oder navigieren</text>
<text x="713.20" y="17" font-size="8.4" textLength="78.10" lengthAdjust="spacingAndGlyphs" fill="#ffffff" stroke="#fff" stroke-width="0.32">Online-Shop anzeigen</text>
<text x="25.30" y="46" font-size="8.5" textLength="29.90" lengthAdjust="spacingAndGlyphs" fill="#ffffff" stroke="#fff" stroke-width="0.3">Startseite</text>
<text x="25.30" y="66" font-size="8.5" textLength="41.00" lengthAdjust="spacingAndGlyphs" fill="#ffffff" stroke="#fff" stroke-width="0.3">Bestellungen</text>
<text x="25.30" y="86" font-size="8.5" textLength="28.70" lengthAdjust="spacingAndGlyphs" fill="#ffffff" stroke="#fff" stroke-width="0.3">Produkte</text>
<text x="25.30" y="327" font-size="8.5" textLength="23.70" lengthAdjust="spacingAndGlyphs" fill="#ffffff" stroke="#fff" stroke-width="0.3">Kunden</text>
<text x="25.30" y="346" font-size="8.5" textLength="38.70" lengthAdjust="spacingAndGlyphs" fill="#ffffff" stroke="#fff" stroke-width="0.3">Online-Shop</text>
<text x="25.30" y="366" font-size="8.5" textLength="31.50" lengthAdjust="spacingAndGlyphs" fill="#ffffff" stroke="#fff" stroke-width="0.3">Marketing</text>
<text x="25.30" y="386" font-size="8.5" textLength="27.90" lengthAdjust="spacingAndGlyphs" fill="#ffffff" stroke="#fff" stroke-width="0.3">Analysen</text>
<text x="25.30" y="406" font-size="8.5" textLength="15.70" lengthAdjust="spacingAndGlyphs" fill="#ffffff" stroke="#fff" stroke-width="0.3">Apps</text>
<text x="25.30" y="426" font-size="8.5" textLength="21.70" lengthAdjust="spacingAndGlyphs" fill="#ffffff" stroke="#fff" stroke-width="0.3">Kanäle</text>
<text x="25.30" y="446" font-size="8.5" textLength="42.20" lengthAdjust="spacingAndGlyphs" fill="#ffffff" stroke="#fff" stroke-width="0.3">Einstellungen</text>
<text x="26.30" y="105" font-size="8.5" textLength="46.20" lengthAdjust="spacingAndGlyphs" fill="#ffffff" font-weight="700">Alle Produkte</text>
<text x="26.30" y="122" font-size="8.5" textLength="37.70" lengthAdjust="spacingAndGlyphs" fill="#ffffff" stroke="#ffffff" stroke-width="0.2">Hinzufügen</text>
<text x="26.30" y="139" font-size="8.5" textLength="24.70" lengthAdjust="spacingAndGlyphs" fill="#ffffff" stroke="#ffffff" stroke-width="0.2">Suchen</text>
<text x="26.30" y="156" font-size="8.5" textLength="39.70" lengthAdjust="spacingAndGlyphs" fill="#ffffff" stroke="#ffffff" stroke-width="0.2">Importieren</text>
<text x="26.30" y="173" font-size="8.5" textLength="38.70" lengthAdjust="spacingAndGlyphs" fill="#ffffff" stroke="#ffffff" stroke-width="0.2">Exportieren</text>
<text x="26.30" y="189" font-size="8.5" textLength="36.20" lengthAdjust="spacingAndGlyphs" fill="#ffffff" stroke="#ffffff" stroke-width="0.2">Kategorien</text>
<text x="26.30" y="206" font-size="8.5" textLength="31.20" lengthAdjust="spacingAndGlyphs" fill="#ffffff" stroke="#ffffff" stroke-width="0.2">Optionen</text>
<text x="26.30" y="223" font-size="8.5" textLength="43.70" lengthAdjust="spacingAndGlyphs" fill="#ffffff" stroke="#ffffff" stroke-width="0.2">Wird gefiltert</text>
<text x="26.30" y="240" font-size="8.5" textLength="44.70" lengthAdjust="spacingAndGlyphs" fill="#ffffff" stroke="#ffffff" stroke-width="0.2">Bewertungen</text>
<text x="26.30" y="257" font-size="8.5" textLength="34.70" lengthAdjust="spacingAndGlyphs" fill="#ffffff" stroke="#ffffff" stroke-width="0.2">Preislisten</text>
<text x="26.30" y="274" font-size="8.5" textLength="24.70" lengthAdjust="spacingAndGlyphs" fill="#ffffff" stroke="#ffffff" stroke-width="0.2">Marken</text>
<text x="26.30" y="290" font-size="8.5" textLength="58.70" lengthAdjust="spacingAndGlyphs" fill="#ff58a6" stroke="#ff58a6" stroke-width="0.2">SKUs importieren</text>
<text x="26.30" y="307" font-size="8.5" textLength="57.70" lengthAdjust="spacingAndGlyphs" fill="#d8f4f4" stroke="#d8f4f4" stroke-width="0.2">SKUs exportieren</text>
<text x="173.00" y="64" font-size="7.3" textLength="70.00" lengthAdjust="spacingAndGlyphs" fill="#8b8fa6" font-weight="700">PRODUKTE ANZEIGEN</text>
<text x="161.00" y="86" font-size="15.3" textLength="118.70" lengthAdjust="spacingAndGlyphs" fill="#585b69">Bunte Babysocken</text>
<text x="288.40" y="86" font-size="8.2" textLength="83.60" lengthAdjust="spacingAndGlyphs" fill="#4a5fe8" stroke="#4a5fe8" stroke-width="0.2">Im Online-Shop anzeigen</text>
<text x="700.00" y="64" font-size="7.6" textLength="22.50" lengthAdjust="spacingAndGlyphs" fill="#5e637a">3 von 3</text>
<text x="460.00" y="122" font-size="12.4" textLength="112.50" lengthAdjust="spacingAndGlyphs" fill="#3d404e">Produktinformationen</text>
<text x="423.50" y="137" font-size="7.6" textLength="185.00" lengthAdjust="spacingAndGlyphs" fill="#5e637a">Informationen, die bei der Definition eines Produkts helfen.</text>
<text x="165.20" y="134" font-size="8.6" textLength="47.20" lengthAdjust="spacingAndGlyphs" fill="#64687a">Grundlegende</text>
<text x="165.20" y="146" font-size="8.6" textLength="47.80" lengthAdjust="spacingAndGlyphs" fill="#64687a">Informationen</text>
<text x="165.20" y="165" font-size="8.6" textLength="45.80" lengthAdjust="spacingAndGlyphs" fill="#64687a">Beschreibung</text>
<text x="165.20" y="184" font-size="8.6" textLength="49.80" lengthAdjust="spacingAndGlyphs" fill="#64687a">Bilder &amp; <tspan fill="#f0307c">Vide</tspan>os</text>
<text x="165.20" y="203" font-size="8.6" textLength="64.00" lengthAdjust="spacingAndGlyphs" fill="#64687a">Produktkennungen</text>
<text x="165.20" y="221" font-size="8.6" textLength="51.80" lengthAdjust="spacingAndGlyphs" fill="#64687a">Preisgestaltung</text>
<text x="165.20" y="240" font-size="8.6" textLength="27.60" lengthAdjust="spacingAndGlyphs" fill="#64687a">Inventar</text>
<text x="165.20" y="267" font-size="8.6" textLength="38.40" lengthAdjust="spacingAndGlyphs" fill="#64687a">Variationen</text>
<text x="165.20" y="286" font-size="8.6" textLength="44.80" lengthAdjust="spacingAndGlyphs" fill="#3fae6a">Anpassungen</text>
<text x="165.20" y="313" font-size="8.6" textLength="66.80" lengthAdjust="spacingAndGlyphs" fill="#64687a">Online-Shop-Details</text>
<text x="165.20" y="332" font-size="8.6" textLength="84.80" lengthAdjust="spacingAndGlyphs" fill="#64687a">Benutzerdefinierte Felder</text>
<text x="165.20" y="351" font-size="8.6" textLength="68.50" lengthAdjust="spacingAndGlyphs" fill="#64687a">Verwandte Produkte</text>
<text x="165.20" y="378" font-size="8.6" textLength="82.30" lengthAdjust="spacingAndGlyphs" fill="#64687a">Abmessungen &amp; Gewicht</text>
<text x="165.20" y="397" font-size="8.6" textLength="66.80" lengthAdjust="spacingAndGlyphs" fill="#64687a">Details zum Versand</text>
<text x="165.20" y="416" font-size="8.6" textLength="39.50" lengthAdjust="spacingAndGlyphs" fill="#64687a">Käuflichkeit</text>
<text x="165.20" y="435" font-size="8.6" textLength="71.40" lengthAdjust="spacingAndGlyphs" fill="#64687a">Geschenkverpackung</text>
<text x="165.20" y="453" font-size="8.6" textLength="60.50" lengthAdjust="spacingAndGlyphs" fill="#64687a">Zollinformationen</text>
<text x="165.20" y="480" font-size="8.6" textLength="13.80" lengthAdjust="spacingAndGlyphs" fill="#64687a">SEO</text>
<text x="165.20" y="499" font-size="8.6" textLength="71.80" lengthAdjust="spacingAndGlyphs" fill="#64687a">Open-Graph-Freigabe</text>
<text x="290.80" y="174" font-size="12.4" textLength="145.60" lengthAdjust="spacingAndGlyphs" fill="#3d404e">Grundlegende Informationen</text>
<text x="308.80" y="203" font-size="8.4" textLength="75.70" lengthAdjust="spacingAndGlyphs" fill="#4a4d5c">Im Online-Shop sichtbar</text>
<text x="290.80" y="233" font-size="8.4" textLength="42.70" lengthAdjust="spacingAndGlyphs" fill="#5e637a">Produktname</text>
<text x="335.30" y="233" font-size="8.4" textLength="3.30" lengthAdjust="spacingAndGlyphs" fill="#d9622b">*</text>
<text x="296.80" y="248" font-size="8.4" textLength="58.60" lengthAdjust="spacingAndGlyphs" fill="#313440">Bunte Babysocken</text>
<text x="524.20" y="233" font-size="7.5" textLength="12.80" lengthAdjust="spacingAndGlyphs" fill="#5e637a">SKU</text>
<text x="530.50" y="248" font-size="7.5" textLength="29.30" lengthAdjust="spacingAndGlyphs" fill="#313440">THX-1138</text>
<text x="290.80" y="275" font-size="8.4" textLength="35.20" lengthAdjust="spacingAndGlyphs" fill="#5a8f7a">Produkttyp</text>
<text x="295.60" y="290" font-size="8.4" textLength="26.40" lengthAdjust="spacingAndGlyphs" fill="#e8246e">Physisch</text>
<text x="524.20" y="275" font-size="8.4" textLength="45.30" lengthAdjust="spacingAndGlyphs" fill="#5e637a">Standardpreis</text>
<text x="571.30" y="275" font-size="8.4" textLength="3.30" lengthAdjust="spacingAndGlyphs" fill="#d9622b">*</text>
<text x="577.20" y="275" font-size="8.4" textLength="71.40" lengthAdjust="spacingAndGlyphs" fill="#5e637a">(einschließlich Steuern)</text>
<text x="530.50" y="290" font-size="8.4" textLength="4.00" lengthAdjust="spacingAndGlyphs" fill="#313440">$</text>
<text x="537.60" y="290" font-size="8.4" textLength="16.80" lengthAdjust="spacingAndGlyphs" fill="#313440">19.99</text>
<text x="636.20" y="305" font-size="8.4" textLength="106.10" lengthAdjust="spacingAndGlyphs" fill="#9094aa">Weitere Preisgestaltungsoptionen</text>
<text x="290.80" y="329" font-size="8.4" textLength="18.70" lengthAdjust="spacingAndGlyphs" fill="#5e637a">Marke</text>
<text x="524.20" y="329" font-size="8.4" textLength="25.10" lengthAdjust="spacingAndGlyphs" fill="#5e637a">Gewicht</text>
<text x="551.00" y="329" font-size="8.4" textLength="3.40" lengthAdjust="spacingAndGlyphs" fill="#5e637a">*</text>
<text x="530.50" y="344" font-size="8.4" textLength="12.50" lengthAdjust="spacingAndGlyphs" fill="#313440">1.00</text>
<text x="726.00" y="344" font-size="7.5" textLength="12.20" lengthAdjust="spacingAndGlyphs" fill="#5e637a">KGS</text>
<text x="290.80" y="372" font-size="8.4" textLength="34.20" lengthAdjust="spacingAndGlyphs" fill="#5e637a">Kategorien</text>
<text x="668.20" y="373" font-size="8.4" textLength="66.00" lengthAdjust="spacingAndGlyphs" fill="#4a5fe8">Kategorie hinzufügen</text>
<text x="352.00" y="395" font-size="8.4" textLength="11.50" lengthAdjust="spacingAndGlyphs" fill="#4a4d5c">Alle</text>
<text x="352.00" y="415" font-size="8.4" textLength="37.50" lengthAdjust="spacingAndGlyphs" fill="#4a4d5c">Babysocken</text>
<text x="352.00" y="435" font-size="8.4" textLength="27.00" lengthAdjust="spacingAndGlyphs" fill="#4a4d5c">Sonstige</text>
<text x="290.80" y="515" font-size="12.4" textLength="68.80" lengthAdjust="spacingAndGlyphs" fill="#3d404e">Beschreibung</text>
<text x="295.50" y="546" font-size="7.0" textLength="25.50" lengthAdjust="spacingAndGlyphs" fill="#595959">Formate</text>
<text x="335.00" y="546" font-size="7.0" textLength="26.00" lengthAdjust="spacingAndGlyphs" fill="#595959">Verdana</text>
<text x="395.00" y="546" font-size="7.0" textLength="13.00" lengthAdjust="spacingAndGlyphs" fill="#595959">11pt</text>
<text x="662.20" y="588" font-size="8.4" textLength="33.80" lengthAdjust="spacingAndGlyphs" fill="#4a5fe8">Abbrechen</text>
<text x="688.00" y="9" font-size="4.6" textLength="2.40" lengthAdjust="spacingAndGlyphs" fill="#4a2a10" font-weight="700">2</text>
<text x="712.80" y="588" font-size="8.4" textLength="31.40" lengthAdjust="spacingAndGlyphs" fill="#ffffff" stroke="#fff" stroke-width="0.15">Speichern</text>
</svg>
<!-- collapse btn on top -->

</body></html>
